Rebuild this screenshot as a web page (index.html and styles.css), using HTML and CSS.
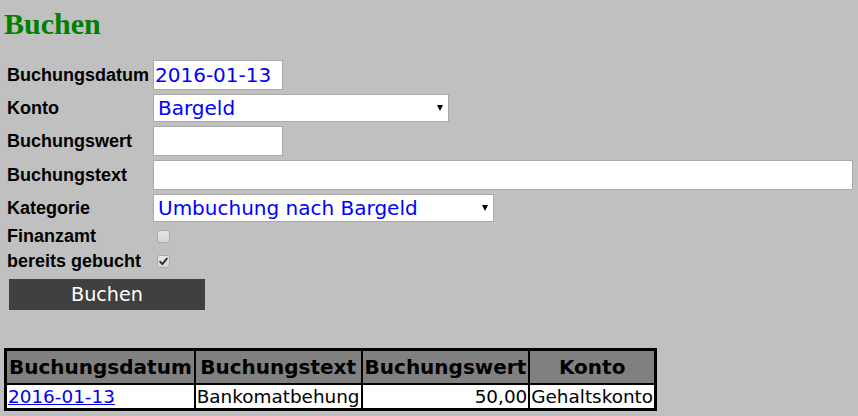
FILE: index.html
```html
<!DOCTYPE html>
<html lang="de">
<head>
<meta charset="utf-8">
<title>Buchen</title>
<link rel="stylesheet" href="styles.css">
</head>
<body>
<h1 class="title">Buchen</h1>
<form class="booking">
  <div class="form-grid">
    <label class="lbl">Buchungsdatum</label>
    <div class="field"><input class="txt short" type="text" value="2016-01-13"></div>

    <label class="lbl">Konto</label>
    <div class="field">
      <div class="select-wrap konto">
        <select class="sel"><option>Bargeld</option></select>
        <span class="arrow"></span>
      </div>
    </div>

    <label class="lbl">Buchungswert</label>
    <div class="field"><input class="txt short" type="text" value=""></div>

    <label class="lbl">Buchungstext</label>
    <div class="field"><input class="txt long" type="text" value=""></div>

    <label class="lbl">Kategorie</label>
    <div class="field">
      <div class="select-wrap kategorie">
        <select class="sel"><option>Umbuchung nach Bargeld</option></select>
        <span class="arrow"></span>
      </div>
    </div>

    <label class="lbl cb-lbl">Finanzamt</label>
    <div class="field cb-field">
      <span class="cb-wrap"><input class="cb" type="checkbox"></span>
    </div>

    <label class="lbl cb-lbl">bereits gebucht</label>
    <div class="field cb-field">
      <span class="cb-wrap"><input class="cb" type="checkbox" checked>
        <svg class="tick" viewBox="0 0 13 13" width="13" height="13"><path d="M3.2 6.8 L5.4 9.2 L9.8 3.6" fill="none" stroke="#2e2e2e" stroke-width="1.9" stroke-linecap="round" stroke-linejoin="round"/></svg>
      </span>
    </div>
  </div>
  <button class="submit" type="button">Buchen</button>
</form>

<table class="bookings">
  <thead>
    <tr><th>Buchungsdatum</th><th>Buchungstext</th><th>Buchungswert</th><th>Konto</th></tr>
  </thead>
  <tbody>
    <tr><td><a href="#">2016-01-13</a></td><td>Bankomatbehung</td><td class="num">50,00</td><td>Gehaltskonto</td></tr>
  </tbody>
</table>
</body>
</html>
```

FILE: styles.css
```css
html, body {
  margin: 0;
  background: #c0c0c0;
}
body {
  padding: 4px;
}
.title {
  font-family: "Liberation Serif", "Times New Roman", serif;
  font-weight: bold;
  font-size: 30px;
  line-height: 34px;
  color: #008000;
  margin: 3px 0 19px 0;
}
.booking {
  margin: 0;
}
.form-grid {
  display: grid;
  grid-template-columns: 146px auto;
  row-gap: 4px;
  align-items: center;
  padding-left: 3px;
}
.lbl {
  font-family: "Liberation Sans", Arial, sans-serif;
  font-weight: bold;
  font-size: 18px;
  color: #000;
  white-space: nowrap;
}
.field {
  display: flex;
  align-items: center;
}
.txt {
  box-sizing: border-box;
  height: 30px;
  border: 1px solid #a9a9a9;
  background: #fff;
  padding: 0 1px;
  margin: 0;
  font-family: "DejaVu Sans", Verdana, sans-serif;
  font-size: 20px;
  color: #0000ff;
  outline: none;
}
.txt.short { width: 130px; }
.txt.long { width: 700px; }
.select-wrap {
  position: relative;
  display: inline-block;
}
.sel {
  -webkit-appearance: none;
  appearance: none;
  box-sizing: border-box;
  height: 28px;
  width: 100%;
  border: 1px solid #a9a9a9;
  border-radius: 0;
  background: #fff;
  padding: 0 4px;
  margin: 0;
  font-family: "DejaVu Sans", Verdana, sans-serif;
  font-size: 20px;
  color: #0000ff;
}
.konto { width: 296px; }
.kategorie { width: 341px; }
.arrow {
  position: absolute;
  right: 6px;
  top: 11px;
  width: 0;
  height: 0;
  border-left: 3px solid transparent;
  border-right: 3px solid transparent;
  border-top: 6px solid #000;
  pointer-events: none;
}
.cb-field {
  height: 21px;
}
.cb-wrap {
  position: relative;
  display: inline-block;
  width: 13px;
  height: 13px;
  margin-left: 4px;
}
.cb {
  -webkit-appearance: none;
  appearance: none;
  box-sizing: border-box;
  display: block;
  width: 13px;
  height: 13px;
  margin: 0;
  border: 1px solid #aaaaaa;
  border-radius: 3px;
  background: linear-gradient(#e6e6e6, #d6d6d6);
}
.tick {
  position: absolute;
  left: 0;
  top: 0;
}
.submit {
  display: block;
  box-sizing: border-box;
  width: 196px;
  height: 31px;
  margin: 7px 0 0 5px;
  border: 0;
  background: #404040;
  color: #fff;
  font-family: "DejaVu Sans", Verdana, sans-serif;
  font-size: 19.2px;
  padding: 0;
}
.bookings {
  border-collapse: collapse;
  border: 3px solid #000;
  margin-top: 38px;
  font-family: "DejaVu Sans", Verdana, sans-serif;
}
.bookings th {
  background: #808080;
  border: 2px solid #000;
  font-size: 20px;
  line-height: 24px;
  padding: 4px 2px;
  font-weight: bold;
  color: #000;
}
.bookings td {
  background: #fff;
  border: 2px solid #000;
  font-size: 18.4px;
  line-height: 21px;
  padding: 1px 1px;
  white-space: nowrap;
}
.bookings td.num {
  text-align: right;
}
.bookings a {
  color: #0000ee;
}
```
